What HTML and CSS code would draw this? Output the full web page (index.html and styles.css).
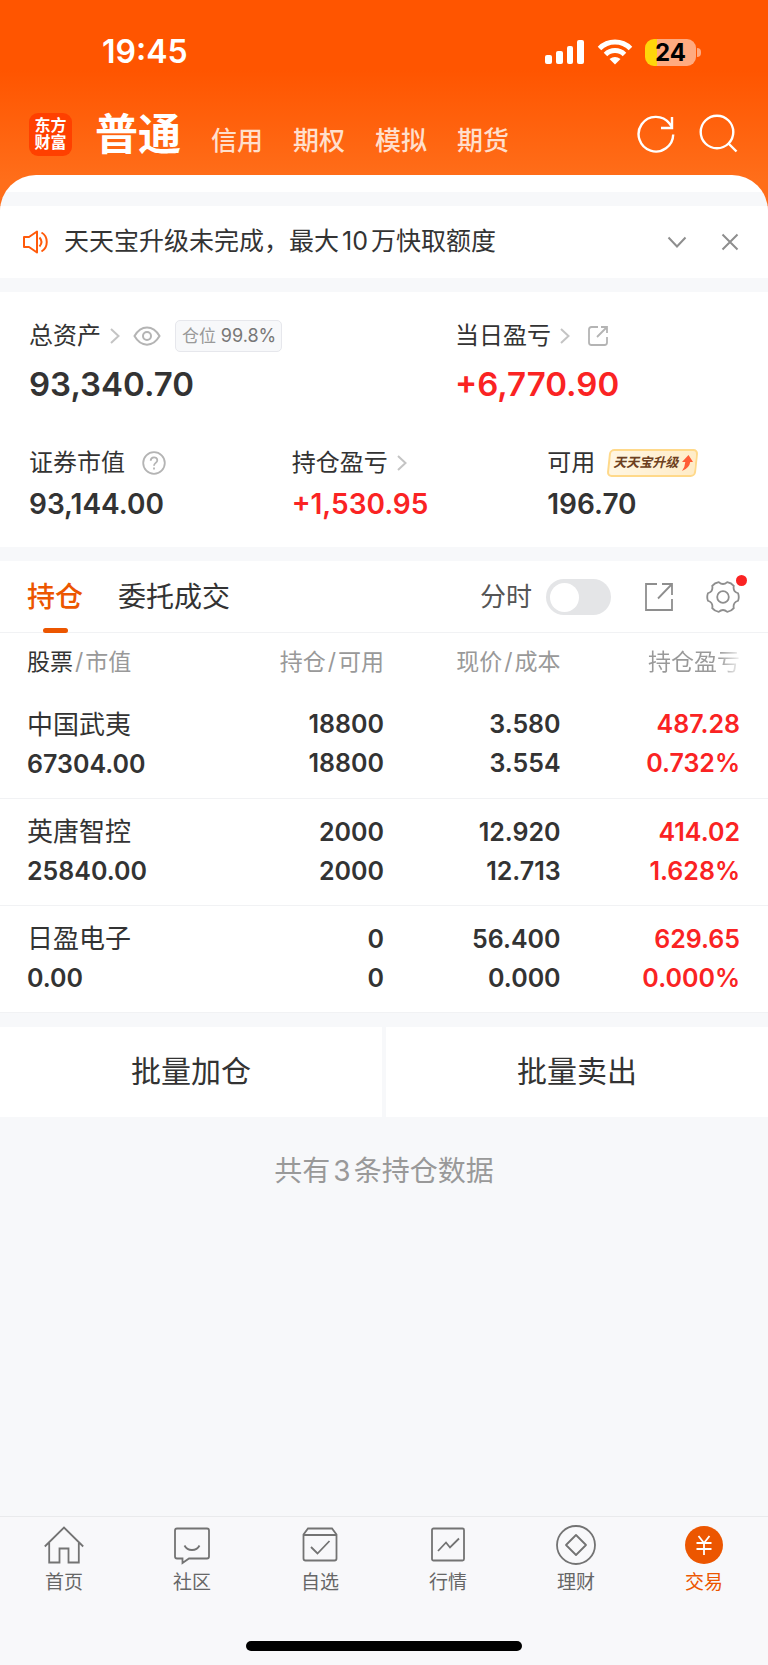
FILE: index.html
```html
<!DOCTYPE html>
<html lang="zh-CN">
<head>
    <meta charset="UTF-8">
    <meta name="viewport" content="width=device-width, initial-scale=1.0">
    <title>交易 - 持仓</title>
    <link rel="stylesheet" href="styles.css">
</head>
<body>
    <div class="app">
        <header class="header">
            <div class="status-bar">
                <span class="time">19:45</span>
                <div class="status-icons">
                    <svg width="40" height="26" viewBox="0 0 40 26" fill="#fff">
                        <rect x="0" y="16" width="7" height="9" rx="2"/>
                        <rect x="11" y="12" width="7" height="13" rx="2"/>
                        <rect x="22" y="7" width="6" height="18" rx="2"/>
                        <rect x="32" y="1" width="7" height="24" rx="2"/>
                    </svg>
                    <svg width="36" height="26" viewBox="0 0 36 26" fill="none" stroke="#fff" stroke-width="5">
                        <path d="M2.5 9.5a22 22 0 0 1 31 0"/>
                        <path d="M8.5 15.5a13.5 13.5 0 0 1 19 0"/>
                        <path d="M18 25.5l-5.5-5.5q5.5-4 11 0z" fill="#fff" stroke="none"/>
                    </svg>
                    <div class="battery">24</div>
                </div>
            </div>
            <nav class="top-nav">
                <a href="#" class="logo">东方<br>财富</a>
                <a href="#" class="account active">普通</a>
                <a href="#" class="account">信用</a>
                <a href="#" class="account">期权</a>
                <a href="#" class="account">模拟</a>
                <a href="#" class="account">期货</a>
                <div class="top-actions">
                    <button type="button" aria-label="刷新">
                        <svg width="40" height="40" viewBox="0 0 40 40" fill="none" stroke="#fff" stroke-width="2.4">
                            <path d="M37.2 20.5A17.3 17.3 0 1 1 33.5 9.5L36 13"/>
                            <path d="M36 3v11H25"/>
                        </svg>
                    </button>
                    <button type="button" aria-label="搜索">
                        <svg width="40" height="40" viewBox="0 0 40 40" fill="none" stroke="#fff" stroke-width="2.4">
                            <circle cx="18" cy="18" r="16.3"/>
                            <path d="M29 29l8.5 8.5"/>
                        </svg>
                    </button>
                </div>
            </nav>
        </header>

        <main class="sheet">
            <section class="notice">
                <svg width="26" height="24" viewBox="0 0 26 24" fill="none" stroke="#ff5a0a" stroke-width="2">
                    <path d="M1 7h5l8-5.5v21L6 17H1z" stroke-linejoin="round"/>
                    <path d="M16.5 7.500q4 4.500 0 9"/>
                    <path d="M18.5 2.500c7 4 7 15 0 19"/>
                </svg>
                <p>天天宝升级未完成，最大<span class="num">10</span>万快取额度</p>
                <button type="button" aria-label="展开">
                    <svg width="20" height="20" viewBox="0 0 20 20" fill="none" stroke="#8e8e8e" stroke-width="2"><path d="M1.500 5.500l8.500 9 8.500-9"/></svg>
                </button>
                <button type="button" aria-label="关闭">
                    <svg width="20" height="20" viewBox="0 0 20 20" fill="none" stroke="#8e8e8e" stroke-width="2"><path d="M2.500 2.500l15 15M17.500 2.500l-15 15"/></svg>
                </button>
            </section>

            <section class="assets">
                <div class="assets-row total">
                    <div>
                        <div class="label">
                            总资产
                            <svg class="chevron" width="10" height="16" viewBox="0 0 10 16"><path d="M1 1l7.500 7L1 15"/></svg>
                            <svg class="eye" width="28" height="20" viewBox="0 0 28 20" fill="none" stroke="#b4b4b4" stroke-width="2">
                                <path d="M1.500 10C8-1.500 20-1.500 26.500 10 20 21.500 8 21.500 1.500 10z"/>
                                <circle cx="14" cy="10" r="4"/>
                            </svg>
                            <span class="ratio">仓位 <b>99.8%</b></span>
                        </div>
                        <div class="value">93,340.70</div>
                    </div>
                    <div>
                        <div class="label">
                            当日盈亏
                            <svg class="chevron" width="10" height="16" viewBox="0 0 10 16"><path d="M1 1l7.500 7L1 15"/></svg>
                            <svg class="share" width="22" height="22" viewBox="0 0 22 22" fill="none" stroke="#b4b4b4" stroke-width="1.8">
                                <path d="M11 2H4.500Q2 2 2 4.500v13Q2 20 4.500 20h13q2.500 0 2.500-2.500V12M10 12L20 2M14 2h6v6"/>
                            </svg>
                        </div>
                        <div class="value up">+6,770.90</div>
                    </div>
                </div>
                <div class="assets-row detail">
                    <div>
                        <div class="label">
                            证券市值
                            <svg class="help" width="24" height="24" viewBox="0 0 24 24" fill="none" stroke="#b4b4b4" stroke-width="1.8">
                                <circle cx="12" cy="12" r="10.8"/>
                                <path d="M8.700 9.800C8.700 5.300 15.300 5.300 15.300 9.300c0 2.500-3.300 2.700-3.300 5.400M12 16.400v2.200"/>
                            </svg>
                        </div>
                        <div class="value">93,144.00</div>
                    </div>
                    <div>
                        <div class="label">
                            持仓盈亏
                            <svg class="chevron" width="10" height="16" viewBox="0 0 10 16"><path d="M1 1l7.500 7L1 15"/></svg>
                        </div>
                        <div class="value up">+1,530.95</div>
                    </div>
                    <div>
                        <div class="label">
                            可用
                            <a href="#" class="promo">天天宝升级<svg width="12" height="16" viewBox="0 0 12 16"><path d="M7.500 0L12 7H9.200Q8.500 13 1 16 4 12 4.300 7H1z" fill="#ff5a35"/></svg></a>
                        </div>
                        <div class="value">196.70</div>
                    </div>
                </div>
            </section>

            <section class="positions">
                <div class="tabs">
                    <a href="#" class="tab active">持仓</a>
                    <a href="#" class="tab">委托成交</a>
                    <div class="tools">
                        <label for="time-share">分时</label>
                        <input type="checkbox" id="time-share" class="switch">
                        <button type="button" aria-label="分享">
                            <svg width="28" height="28" viewBox="0 0 28 28" fill="none" stroke="#8e8e8e" stroke-width="1.8">
                                <path d="M12 1H1v26h26V16M13 15.500L27 1M17 1h10v11"/>
                            </svg>
                        </button>
                        <button type="button" class="settings" aria-label="设置">
                            <svg width="34" height="34" viewBox="-1 -1 34 34" fill="none" stroke="#8e8e8e" stroke-width="1.8">
                                <path d="M31.040 19.750Q25.600 21.550 26.770 27.150 24.250 30.300 20.270 30.900 16 27.100 11.730 30.900 7.750 30.300 5.230 27.150 6.400 21.550.96 19.750-.5 16 .96 12.250 6.400 10.450 5.230 4.850 7.750 1.700 11.730 1.100 16 4.900 20.270 1.100 24.250 1.700 26.770 4.850 25.600 10.450 31.040 12.250 32.500 16 31.040 19.750z"/>
                                <circle cx="16" cy="16" r="5.8"/>
                            </svg>
                        </button>
                    </div>
                </div>
                <table>
                    <thead>
                        <tr>
                            <th><strong>股票</strong><i>/</i>市值</th>
                            <th>持仓<i>/</i>可用</th>
                            <th>现价<i>/</i>成本</th>
                            <th class="fade">持仓盈亏</th>
                        </tr>
                    </thead>
                    <tbody>
                        <tr>
                            <td><span class="name">中国武夷</span><br>67304.00</td>
                            <td>18800<br>18800</td>
                            <td>3.580<br>3.554</td>
                            <td class="up">487.28<br>0.732%</td>
                        </tr>
                        <tr>
                            <td><span class="name">英唐智控</span><br>25840.00</td>
                            <td>2000<br>2000</td>
                            <td>12.920<br>12.713</td>
                            <td class="up">414.02<br>1.628%</td>
                        </tr>
                        <tr>
                            <td><span class="name">日盈电子</span><br>0.00</td>
                            <td>0<br>0</td>
                            <td>56.400<br>0.000</td>
                            <td class="up">629.65<br>0.000%</td>
                        </tr>
                    </tbody>
                </table>
            </section>

            <div class="batch">
                <button type="button">批量加仓</button>
                <button type="button">批量卖出</button>
            </div>
            <p class="summary">共有<span class="num">3</span>条持仓数据</p>
        </main>

        <footer class="tab-bar">
            <nav>
                <a href="#">
                    <svg width="40" height="40" viewBox="0 0 40 40">
                        <path d="M.8 21.500L20 2.500l19.200 19M5.200 18v19.500h10.300v-14h9v14h10.300V18"/>
                    </svg>
                    首页
                </a>
                <a href="#">
                    <svg width="40" height="40" viewBox="0 0 40 40">
                        <path d="M5 3.500h30q2 0 2 2v26q0 2-2 2H17l-6.500 4.500v-4.500H5q-2 0-2-2v-26q0-2 2-2z"/>
                        <path d="M12.500 20.500c3 6 12 6 15 0"/>
                    </svg>
                    社区
                </a>
                <a href="#">
                    <svg width="40" height="40" viewBox="0 0 40 40">
                        <path d="M3.500 9.500L8 3.500h24l4.500 6v24q0 2-2 2h-29q-2 0-2-2zM3.500 10h33M11 22l6.500 6.500L29.500 16"/>
                    </svg>
                    自选
                </a>
                <a href="#">
                    <svg width="40" height="40" viewBox="0 0 40 40">
                        <rect x="4" y="3.500" width="32" height="32" rx="1.500"/>
                        <path d="M10 26l8-8.500 4 5 9-9"/>
                    </svg>
                    行情
                </a>
                <a href="#">
                    <svg width="40" height="40" viewBox="0 0 40 40">
                        <circle cx="20" cy="20" r="19"/>
                        <path d="M20 10l10 10-10 10-10-10z" stroke-linejoin="round"/>
                    </svg>
                    理财
                </a>
                <a href="#" class="active">
                    <svg width="40" height="40" viewBox="0 0 40 40">
                        <circle cx="20" cy="20" r="19" fill="#ec5600" stroke="none"/>
                        <path d="M14.500 11l5.500 7 5.500-7M20 18v12M12.500 18h15M12.500 24h15" stroke="#fff"/>
                    </svg>
                    交易
                </a>
            </nav>
            <div class="home-indicator"></div>
        </footer>
    </div>
</body>
</html>
```
FILE: styles.css
```css
* {
    box-sizing: border-box;
}
body {
    margin: 0;
    background: #f7f8fa;
    color: #333;
    font-family: Inter, "Noto Sans CJK SC", sans-serif;
    font-size: 24px;
    line-height: 1.5;
}
a {
    color: inherit;
    text-decoration: none;
}
button {
    background: none;
    border: none;
    padding: 0;
    color: inherit;
    font: inherit;
    cursor: pointer;
}
p {
    margin: 0;
}
svg {
    display: block;
    flex: none;
}
.app {
    display: flex;
    flex-direction: column;
    min-height: 100vh;
}
.up {
    color: #fa2323;
}
.num {
    margin: 0 3px;
}

/* Шапка */
.header {
    padding-bottom: 50px;
    background: linear-gradient(#ff5500 70px, #ff6e1a 180px);
    color: #fff;
}
.status-bar {
    display: flex;
    align-items: center;
    justify-content: space-between;
    height: 104px;
    padding: 0 67px 0 102px;
}
.time {
    font-size: 32px;
    font-weight: 600;
}
.status-icons {
    display: flex;
    align-items: center;
    gap: 12px;
}
.battery {
    position: relative;
    width: 51px;
    height: 27px;
    margin-right: 5px;
    border-radius: 9px;
    background: linear-gradient(90deg, #ffd60a 12px, #ffaa80 12px);
    color: #000;
    font-size: 24px;
    font-weight: 700;
    line-height: 27px;
    text-align: center;
}
.battery::after {
    content: "";
    position: absolute;
    top: 9px;
    right: -5px;
    width: 4px;
    height: 9px;
    border-radius: 0 4px 4px 0;
    background: #ffaa80;
}
.top-nav {
    display: flex;
    align-items: center;
    height: 60px;
    padding: 0 29px;
}
.logo {
    width: 43px;
    height: 43px;
    margin-right: 23px;
    padding-top: 4px;
    border-radius: 9px;
    background: #ff4000;
    font-size: 16px;
    font-weight: 700;
    line-height: 17px;
    text-align: center;
}
.account {
    margin: 12px 30px 0 0;
    color: #ffdfcc;
    font-size: 26px;
    font-weight: 500;
}
.account.active {
    margin-top: 0;
    color: #fff;
    font-size: 43px;
    font-weight: 700;
}
.top-actions {
    display: flex;
    gap: 23px;
    margin-left: auto;
}

.sheet {
    margin-top: -39px;
    padding-top: 17px;
    border-radius: 36px 36px 0 0;
    background: linear-gradient(#fff 17px, #f7f8fa 17px);
    overflow: hidden;
}

/* Уведомление */
.notice {
    display: flex;
    align-items: center;
    height: 72px;
    margin-top: 14px;
    padding: 0 28px 0 23px;
    background: #fff;
}
.notice p {
    flex: 1;
    margin-left: 15px;
    font-size: 25px;
}
.notice button {
    margin-left: 33px;
}

/* Активы */
.assets {
    margin-top: 14px;
    padding: 24px 29px 22px;
    background: #fff;
}
.assets-row {
    display: grid;
}
.total {
    grid-template-columns: 60% 40%;
}
.detail {
    grid-template-columns: 37% 36% 27%;
    margin-top: 31px;
}
.label {
    display: flex;
    align-items: center;
    height: 40px;
    white-space: nowrap;
}
.value {
    font-size: 28px;
    font-weight: 600;
    line-height: 42px;
}
.total .value {
    font-size: 33px;
    line-height: 56px;
}
.chevron {
    margin-left: 9px;
    fill: none;
    stroke: #c4c4c4;
    stroke-width: 2;
}
.eye {
    margin-left: 13px;
}
.share {
    margin-left: 17px;
}
.help {
    margin-left: 17px;
}
.ratio {
    margin-left: 14px;
    padding: 0 5px 0 6px;
    border: 1px solid #e6e7ec;
    border-radius: 5px;
    background: #f7f8fa;
    color: #999;
    font-size: 17px;
    line-height: 30px;
}
.ratio b {
    color: #777;
    font-size: 18px;
    font-weight: 400;
}
.promo {
    position: relative;
    z-index: 0;
    display: flex;
    align-items: center;
    gap: 3px;
    height: 28px;
    margin-left: 13px;
    padding: 0 4px 0 5px;
    color: #6d4020;
    font-size: 13px;
    font-style: italic;
    font-weight: 700;
}
.promo::before {
    content: "";
    position: absolute;
    inset: 0;
    z-index: -1;
    border: 2px solid #ffd98a;
    border-radius: 5px;
    background: linear-gradient(90deg, #fff6e2, #ffecc8);
    transform: skewX(-6deg);
}

/* Вкладки */
.positions {
    margin-top: 14px;
    background: #fff;
}
.tabs {
    display: flex;
    align-items: center;
    height: 72px;
    padding: 0 28px 0 27px;
    border-bottom: 1px solid #f1f2f4;
    font-size: 28px;
}
.tab {
    position: relative;
    margin-right: 35px;
    line-height: 72px;
}
.tab.active {
    color: #ec5600;
    font-weight: 500;
}
.tab.active::after {
    content: "";
    position: absolute;
    bottom: 0;
    left: 50%;
    width: 25px;
    height: 5px;
    margin-left: -12px;
    border-radius: 3px;
    background: #ec5600;
}
.tools {
    display: flex;
    align-items: center;
    margin-left: auto;
    color: #555;
    font-size: 26px;
}
.switch {
    appearance: none;
    width: 65px;
    height: 36px;
    margin: 0 34px 0 14px;
    border-radius: 18px;
    background: #e4e5e7;
}
.switch::before {
    content: "";
    display: block;
    width: 29px;
    height: 29px;
    margin: 4px;
    border-radius: 50%;
    background: #fff;
}
.switch:checked {
    background: #ec5600;
}
.switch:checked::before {
    margin-left: 32px;
}
.settings {
    position: relative;
    margin-left: 33px;
}
.settings::after {
    content: "";
    position: absolute;
    top: -5px;
    right: -7px;
    width: 11px;
    height: 11px;
    border-radius: 50%;
    background: #fa2323;
}

/* Таблица позиций */
table {
    width: 100%;
    border-collapse: collapse;
    table-layout: fixed;
}
th, td {
    padding: 0;
    text-align: right;
}
th:first-child, td:first-child {
    width: 30%;
    padding-left: 27px;
    text-align: left;
}
th:nth-child(2) {
    width: 20%;
}
th:nth-child(3) {
    width: 23%;
}
th:last-child, td:last-child {
    padding-right: 28px;
}
th {
    height: 58px;
    color: #999;
    font-size: 23px;
    font-weight: 400;
}
th strong {
    color: #333;
    font-weight: 400;
}
th i {
    margin: 0 2px;
    font-style: normal;
}
.fade {
    background: linear-gradient(90deg, #999 76%, #fff 88%);
    -webkit-background-clip: text;
    background-clip: text;
    color: transparent;
}
td {
    height: 107px;
    border-bottom: 1px solid #f1f2f4;
    font-size: 25px;
    font-weight: 600;
    line-height: 39px;
}
.name {
    font-size: 26px;
    font-weight: 400;
}

.batch {
    display: grid;
    grid-template-columns: 1fr 1fr;
    gap: 4px;
    margin-top: 14px;
}
.batch button {
    height: 90px;
    background: #fff;
    font-size: 30px;
}
.summary {
    padding: 34px 0;
    color: #999;
    font-size: 28px;
    line-height: 40px;
    text-align: center;
}

/* Нижняя панель */
.tab-bar {
    margin-top: auto;
    padding-bottom: 14px;
    border-top: 1px solid #e9eaec;
    background: #f8f8fa;
}
.tab-bar nav {
    display: grid;
    grid-template-columns: repeat(6, 1fr);
    height: 124px;
}
.tab-bar a {
    display: flex;
    flex-direction: column;
    align-items: center;
    gap: 4px;
    padding-top: 8px;
    color: #666;
    font-size: 19px;
    line-height: 28px;
}
.tab-bar svg {
    fill: none;
    stroke: #737373;
    stroke-width: 1.8;
}
.tab-bar .active {
    color: #ec5600;
}
.home-indicator {
    width: 36%;
    height: 10px;
    margin: 0 auto;
    border-radius: 5px;
    background: #000;
}
```
